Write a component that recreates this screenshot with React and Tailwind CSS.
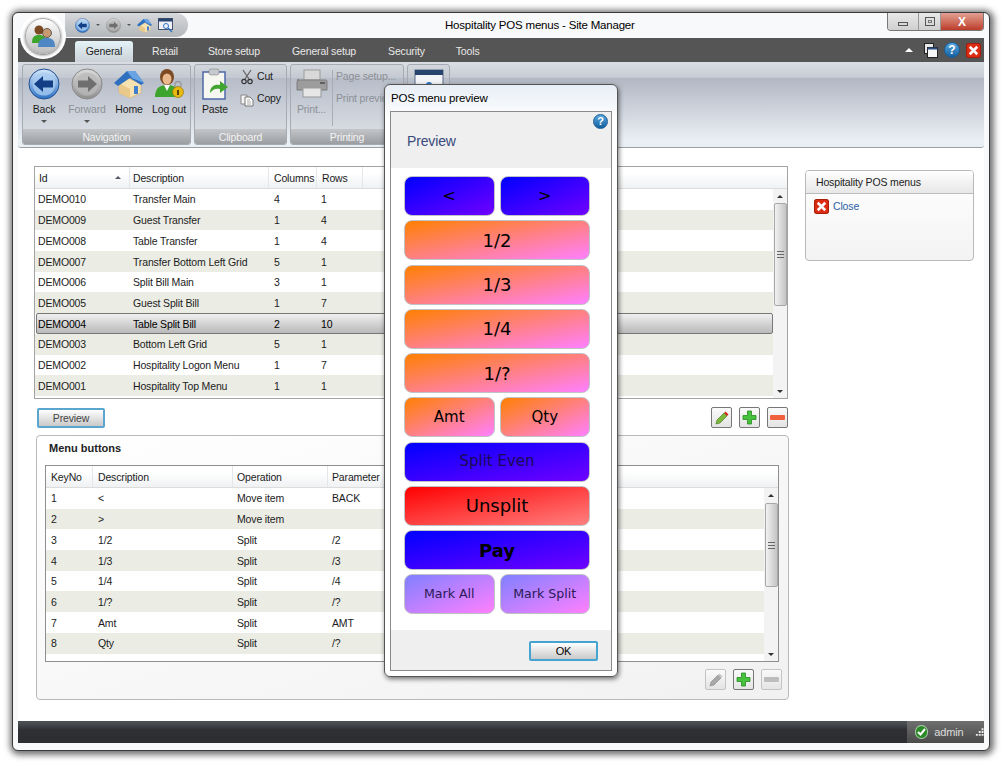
import React from "react";

const topRows = [
  ["DEMO010", "Transfer Main", "4", "1"],
  ["DEMO009", "Guest Transfer", "1", "4"],
  ["DEMO008", "Table Transfer", "1", "4"],
  ["DEMO007", "Transfer Bottom Left Grid", "5", "1"],
  ["DEMO006", "Split Bill Main", "3", "1"],
  ["DEMO005", "Guest Split Bill", "1", "7"],
  ["DEMO004", "Table Split Bill", "2", "10"],
  ["DEMO003", "Bottom Left Grid", "5", "1"],
  ["DEMO002", "Hospitality Logon Menu", "1", "7"],
  ["DEMO001", "Hospitality Top Menu", "1", "1"],
];

const menuRows = [
  ["1", "<", "Move item", "BACK"],
  ["2", ">", "Move item", ""],
  ["3", "1/2", "Split", "/2"],
  ["4", "1/3", "Split", "/3"],
  ["5", "1/4", "Split", "/4"],
  ["6", "1/?", "Split", "/?"],
  ["7", "Amt", "Split", "AMT"],
  ["8", "Qty", "Split", "/?"],
];

function BackIcon({ size = 32, grey = false, flip = false }) {
  const a = grey ? "#dcdcdc" : "#d6e8fb";
  const b = grey ? "#8f8f8f" : "#2f72c4";
  const arrow = grey ? "#6f6f6f" : "#123f86";
  return (
    <svg width={size} height={size} viewBox="0 0 32 32">
      <defs>
        <linearGradient id={grey ? "bg-g" : "bg-b"} x1="0" y1="0" x2="0" y2="1">
          <stop offset="0" stopColor={a} />
          <stop offset="1" stopColor={b} />
        </linearGradient>
      </defs>
      <circle cx="16" cy="16" r="15" fill={`url(#${grey ? "bg-g" : "bg-b"})`} stroke={grey ? "#888" : "#1e4f94"} />
      <circle cx="16" cy="16" r="11.5" fill={grey ? "#b9b9b9" : "#a9cdf2"} opacity="0.75" />
      <path
        d={flip ? "M26 16 L17 8 V12.5 H7 V19.5 H17 V24 Z" : "M6 16 L15 8 V12.5 H25 V19.5 H15 V24 Z"}
        fill={arrow}
      />
    </svg>
  );
}

function HomeIcon({ size = 30 }) {
  return (
    <svg width={size} height={size} viewBox="0 0 30 30">
      <path d="M5 14 L14 9 L27 15 V24 L16 29 L5 24 Z" fill="#f6e2b0" stroke="#c9a25c" strokeWidth="0.5" />
      <path d="M5 14 L16 20 V29 L5 24 Z" fill="#e8c98a" />
      <path d="M0 14 L13 2 L21 2 L30 14 L27 16 L16 9 L4 17 Z" fill="#2f6fc0" />
      <path d="M13 2 L21 2 L30 14 L18 9 Z" fill="#6aa4e3" />
      <rect x="20" y="17" width="4" height="8" fill="#3f7fcf" />
    </svg>
  );
}

function PersonIcon({ size = 30 }) {
  return (
    <svg width={size} height={size} viewBox="0 0 30 30">
      <ellipse cx="13" cy="8" rx="7" ry="8" fill="#7c4a22" />
      <ellipse cx="13" cy="10" rx="4.5" ry="5.5" fill="#e9b98d" />
      <path d="M1 28 C1 18 7 16 13 16 C19 16 25 18 25 28 Z" fill="#3da52e" />
      <path d="M10 16 L13 22 L16 16 Z" fill="#fff" />
      <path d="M21 18 V15.5 A3 3 0 0 1 27 15.5 V18" fill="none" stroke="#999" strokeWidth="1.3" />
      <circle cx="24" cy="23" r="5.5" fill="#e8b90f" stroke="#8a6a00" strokeWidth="0.6" />
      <rect x="23" y="21" width="2" height="5" fill="#5a4300" />
    </svg>
  );
}

function PasteIcon() {
  return (
    <svg width="28" height="32" viewBox="0 0 28 32">
      <rect x="2" y="4" width="22" height="27" fill="#f7f7f2" stroke="#4d68a8" strokeWidth="1.5" />
      <rect x="8" y="1" width="10" height="6" rx="2" fill="#c6c9ce" stroke="#777" strokeWidth="0.5" />
      <path d="M9 25 C9 18 14 16 19 17 V13 L27 19 L19 25 V21 C15 20 12 21 9 25 Z" fill="#42a52f" />
    </svg>
  );
}

function PrinterIcon() {
  return (
    <svg width="32" height="30" viewBox="0 0 32 30">
      <rect x="8" y="1" width="16" height="10" fill="#d8d8d8" stroke="#9b9b9b" />
      <path d="M1 11 H30 Q31 11 31 13 V21 H1 V13 Q1 11 3 11 Z" fill="#9c9c9c" stroke="#7c7c7c" />
      <rect x="7" y="19" width="18" height="9" fill="#e6e6e6" stroke="#999" />
      <rect x="24" y="13" width="5" height="2" fill="#5f5f5f" />
    </svg>
  );
}

function CutIcon() {
  return (
    <svg width="14" height="16" viewBox="0 0 14 16">
      <path d="M3 1 L9 10 M11 1 L5 10" stroke="#666" strokeWidth="1.3" fill="none" />
      <circle cx="4" cy="12.5" r="2.2" fill="none" stroke="#333" strokeWidth="1.2" />
      <circle cx="10" cy="12.5" r="2.2" fill="none" stroke="#333" strokeWidth="1.2" />
    </svg>
  );
}

function CopyIcon() {
  return (
    <svg width="14" height="15" viewBox="0 0 14 15">
      <path d="M1 3 H7 V12 H1 Z" fill="#f4f4f4" stroke="#888" />
      <path d="M5 5 H10 L13 8 V14 H5 Z" fill="#fff" stroke="#777" />
      <path d="M7 8 H10 M7 10 H11 M7 12 H11" stroke="#aaa" />
    </svg>
  );
}

function StackIcon() {
  return (
    <svg width="14" height="15" viewBox="0 0 14 15">
      <rect x="0.5" y="0.5" width="9" height="10" fill="#e8e8e8" stroke="#222" />
      <rect x="3.5" y="4.5" width="10" height="10" fill="#f6f6f6" stroke="#222" />
      <rect x="3.5" y="4.5" width="10" height="2" fill="#2a4e82" />
    </svg>
  );
}

function PreviewWindowIcon() {
  return (
    <svg width="30" height="34" viewBox="0 0 30 34">
      <rect x="1" y="1" width="28" height="30" fill="#f2f4f8" stroke="#5b6b86" />
      <rect x="1" y="1" width="28" height="5" fill="#26446e" />
      <circle cx="15" cy="16" r="3" fill="#2f72c4" />
    </svg>
  );
}

function SearchWindowIcon() {
  return (
    <svg width="16" height="15" viewBox="0 0 16 15">
      <rect x="0.5" y="0.5" width="14" height="11" fill="#eef2f8" stroke="#46536d" />
      <rect x="0.5" y="0.5" width="14" height="3" fill="#26446e" />
      <circle cx="8" cy="8" r="2.5" fill="none" stroke="#2f72c4" />
      <path d="M10 10 L14 14" stroke="#2f72c4" strokeWidth="1.5" />
    </svg>
  );
}

function HelpIcon({ size = 15 }) {
  return (
    <span
      className="flex shrink-0 items-center justify-center rounded-full border border-[#1b5c96] bg-linear-to-b from-[#5aa9e0] to-[#0f5f9f] font-bold tracking-normal text-white [font-family:'Liberation_Sans',sans-serif]"
      style={{ width: size, height: size, fontSize: size - 4 }}
    >
      ?
    </span>
  );
}

function CloseBox({ size = 14 }) {
  return (
    <svg width={size} height={size} viewBox="0 0 14 14" className="shrink-0">
      <rect x="0.5" y="0.5" width="13" height="13" rx="2" fill="#dc2d14" stroke="#a81c08" />
      <path d="M3.5 3.5 L10.5 10.5 M10.5 3.5 L3.5 10.5" stroke="#fff" strokeWidth="2.4" />
    </svg>
  );
}

function Big({ label, width, disabled, arrow, children }) {
  return (
    <div className="flex flex-col items-center" style={{ width }}>
      <div className="flex h-[33px] items-center justify-center">{children}</div>
      <span className={`mt-[3px] whitespace-nowrap leading-[13px] ${disabled ? "text-[#8d9097]" : "text-[#1c1c1c]"}`}>
        {label}
      </span>
      {arrow && <span className="mt-[4px] h-0 w-0 border-x-[3px] border-t-[3px] border-x-transparent border-t-[#555]" />}
    </div>
  );
}

function RibbonGroup({ title, width, children }) {
  return (
    <div
      className="flex h-[81px] shrink-0 flex-col overflow-hidden rounded-[3px] border border-[#a6abb3] bg-[linear-gradient(#d3d7dd_0%,#c4c9d1_16%,#b7bdc8_17%,#dfe4ea_100%)]"
      style={{ width }}
    >
      <div className="flex min-h-0 flex-1 pt-[2px]">{children}</div>
      <div className="flex h-[15px] shrink-0 items-center justify-center bg-linear-to-b from-[#c4c6c9] to-[#9a9da1] pt-px leading-none text-[#f3f3f3]">
        {title}
      </div>
    </div>
  );
}

function Scrollbar({ thumbTop, thumbHeight }) {
  return (
    <div className="flex w-[14px] shrink-0 flex-col items-center bg-[#f3f3f3]">
      <span className="mt-[6px] h-0 w-0 shrink-0 border-x-[3px] border-b-[3px] border-x-transparent border-b-[#333]" />
      <div
        className="flex w-[13px] shrink-0 items-center justify-center rounded-[2px] border border-[#a8a8a8] bg-linear-to-r from-[#f2f2f2] to-[#c4c4c4]"
        style={{ marginTop: thumbTop, height: thumbHeight }}
      >
        <span className="h-[7px] w-[7px] border-y border-[#666] bg-[linear-gradient(transparent_40%,#666_40%,#666_60%,transparent_60%)]" />
      </div>
      <span className="mb-[5px] mt-auto h-0 w-0 shrink-0 border-x-[3px] border-t-[3px] border-x-transparent border-t-[#333]" />
    </div>
  );
}

function HeaderCell({ width, className = "", children }) {
  return (
    <div
      className={`flex h-full shrink-0 items-center border-r border-[#e4e6e9] ${className}`}
      style={{ width }}
    >
      {children}
    </div>
  );
}

function ToolButton({ disabled, children }) {
  return (
    <div
      className={`flex h-[21px] w-[21px] items-center justify-center rounded-[2px] border bg-linear-to-b from-[#fafafa] to-[#e4e4e4] ${
        disabled ? "border-[#c4c4c4]" : "border-[#777]"
      }`}
    >
      {children}
    </div>
  );
}

function Pencil({ grey }) {
  return (
    <svg width="14" height="14" viewBox="0 0 14 14">
      <path d="M1 13 L2 9 L9 2 L12 5 L5 12 Z" fill={grey ? "#a8a8a8" : "#7cb93a"} stroke={grey ? "#888" : "#3f6f1a"} strokeWidth="0.6" />
      <path d="M9 2 L10.5 0.5 L13.5 3.5 L12 5 Z" fill={grey ? "#c4c4c4" : "#d9281a"} />
    </svg>
  );
}

function Plus() {
  return (
    <svg width="15" height="15" viewBox="0 0 15 15">
      <path d="M5.5 1 H9.5 V5.5 H14 V9.5 H9.5 V14 H5.5 V9.5 H1 V5.5 H5.5 Z" fill="#46c23c" stroke="#278a20" strokeWidth="0.8" />
    </svg>
  );
}

function Minus({ grey }) {
  return <span className={`block h-[5px] w-[15px] rounded-[1px] ${grey ? "bg-[#bdbdbd]" : "bg-[#f0603c]"}`} />;
}

function PosButton({ gradient, className = "", children }) {
  return (
    <div
      className={`flex h-[40px] items-center justify-center rounded-[8px] border border-[#bfc2c6] tracking-normal text-black [font-family:'DejaVu_Sans',sans-serif] ${gradient} ${className}`}
    >
      {children}
    </div>
  );
}

const blue = "bg-linear-to-br/srgb from-[#0000ff] to-[#7000ff]";
const orange = "bg-linear-to-br/srgb from-[#ff8000] to-[#ff80ff]";
const red = "bg-linear-to-br/srgb from-[#ff0000] to-[#ff8080]";
const mauve = "bg-linear-to-br/srgb from-[#8080ff] to-[#ff80ff]";

function PreviewDialog() {
  return (
    <div className="absolute left-[384px] top-[84px] z-20 flex h-[593px] w-[234px] flex-col rounded-[6px] border border-[#555] bg-linear-to-b from-[#e8eef5] to-white to-[6%] px-[5px] pb-[5px] shadow-[1px_2px_5px_rgba(0,0,0,0.55)]">
      <div className="flex h-[26px] shrink-0 items-center pl-px pt-[2px] text-[11.5px] text-black">POS menu preview</div>
      <div className="flex min-h-0 flex-1 flex-col border border-[#8a8a8a]">
        <div className="relative flex h-[56px] shrink-0 items-center bg-[#efefef] pl-[16px] pt-[2px] text-[14px] text-[#39497c]">
          Preview
          <span className="absolute right-[3px] top-[2px]">
            <HelpIcon size={15} />
          </span>
        </div>
        <div className="flex flex-1 flex-col gap-[4.25px] bg-white pl-[13px] pr-[21px] pt-[8px]">
          <div className="grid grid-cols-2 gap-x-[5px]">
            <PosButton gradient={blue} className="text-[16px]">&lt;</PosButton>
            <PosButton gradient={blue} className="text-[16px]">&gt;</PosButton>
          </div>
          <PosButton gradient={orange} className="text-[18px]">1/2</PosButton>
          <PosButton gradient={orange} className="text-[18px]">1/3</PosButton>
          <PosButton gradient={orange} className="text-[18px]">1/4</PosButton>
          <PosButton gradient={orange} className="text-[18px]">1/?</PosButton>
          <div className="grid grid-cols-2 gap-x-[5px]">
            <PosButton gradient={orange} className="text-[15px]">Amt</PosButton>
            <PosButton gradient={orange} className="text-[15px]">Qty</PosButton>
          </div>
          <PosButton gradient={blue} className="text-[15px]"><span className="text-[#1a0a55]">Split Even</span></PosButton>
          <PosButton gradient={red} className="text-[18px]">Unsplit</PosButton>
          <PosButton gradient={blue} className="text-[18px] font-bold">Pay</PosButton>
          <div className="grid grid-cols-2 gap-x-[5px]">
            <PosButton gradient={mauve} className="text-[12.6px]"><span className="text-[#2a1a55]">Mark All</span></PosButton>
            <PosButton gradient={mauve} className="text-[12.6px]"><span className="text-[#2a1a55]">Mark Split</span></PosButton>
          </div>
        </div>
        <div className="flex h-[40px] shrink-0 items-start justify-end bg-[#efefef] pr-[13px] pt-[11px]">
          <div className="flex h-[20px] w-[69px] items-center justify-center rounded-[2px] border-2 border-[#45a4d0] bg-linear-to-b from-white to-[#c9c9c9] text-[11px] text-black">
            OK
          </div>
        </div>
      </div>
    </div>
  );
}

export default function App() {
  return (
    <div className="relative h-[762px] w-[1002px] overflow-hidden bg-white pl-[12px] pt-[12px] text-[10.5px] tracking-[-0.15px] text-[#1c1c1c] [font-family:'Liberation_Sans',sans-serif]">
      <div className="flex h-[739px] w-[978px] flex-col rounded-[6px] border border-[#3a3a3a] bg-[#f8f9fa] px-[5px] pb-[7px] shadow-[1px_1px_6px_3px_rgba(0,0,0,0.55)]">
        {/* title bar */}
        <div className="flex h-[25px] shrink-0">
          <div className="ml-[47px] flex h-[24px] w-[123px] items-center gap-[6px] rounded-r-[12px] bg-linear-to-b from-[#d6d8db] to-[#b4b7bb] pl-[10px]">
            <BackIcon size={15} />
            <span className="h-0 w-0 border-x-[2px] border-t-[2px] border-x-transparent border-t-[#555]" />
            <BackIcon size={15} grey flip />
            <span className="h-0 w-0 border-x-[2px] border-t-[2px] border-x-transparent border-t-[#555]" />
            <HomeIcon size={15} />
            <SearchWindowIcon />
          </div>
          <div className="ml-[257px] pt-[5px] text-[11.5px] leading-[14px] tracking-[-0.2px] text-black">Hospitality POS menus - Site Manager</div>
          <div className="ml-auto flex h-[18px] w-[97px] overflow-hidden rounded-b-[4px] border border-t-0 border-[#777]">
            <div className="flex w-[30px] items-end justify-center bg-linear-to-b from-[#e9e9e9] to-[#cfcfcf] pb-[4px]">
              <span className="h-[4px] w-[10px] border border-[#555]" />
            </div>
            <div className="flex w-[23px] items-center justify-center border-x border-[#999] bg-linear-to-b from-[#e9e9e9] to-[#cfcfcf]">
              <span className="flex h-[9px] w-[10px] items-center justify-center border border-[#555]">
                <span className="h-[3px] w-[4px] border border-[#777]" />
              </span>
            </div>
            <div className="flex flex-1 items-center justify-center bg-linear-to-b from-[#e2a093] to-[#bb3a28] text-[12px] font-bold leading-none text-white">
              X
            </div>
          </div>
        </div>

        {/* ribbon tabs */}
        <div className="flex h-[24px] shrink-0 items-end bg-[#555] text-[#e8e8e8]">
          <div className="ml-[57px] flex h-[21px] w-[58px] items-center justify-center rounded-t-[3px] bg-linear-to-b from-[#e3f3f7] to-[#ccd1d8] text-[#222]">
            General
          </div>
          <div className="ml-[19px] h-[21px] leading-[21px]">Retail</div>
          <div className="ml-[30px] h-[21px] leading-[21px]">Store setup</div>
          <div className="ml-[32px] h-[21px] leading-[21px]">General setup</div>
          <div className="ml-[32px] h-[21px] leading-[21px]">Security</div>
          <div className="ml-[31px] h-[21px] leading-[21px]">Tools</div>
          <div className="ml-auto flex h-full items-center gap-[6px] pr-[3px]">
            <span className="mr-[5px] h-0 w-0 border-x-[4px] border-b-[4px] border-x-transparent border-b-white" />
            <StackIcon />
            <HelpIcon size={16} />
            <CloseBox size={15} />
          </div>
        </div>

        {/* ribbon */}
        <div className="flex h-[86px] shrink-0 gap-[3px] rounded-b-[3px] border-b border-[#9a9fa6] bg-[linear-gradient(#dadee4_0%,#c7ccd4_18%,#b1b7c3_19%,#eaeff4_92%)] pl-[4px] pt-[2px]">
          <RibbonGroup title="Navigation" width={169}>
            <Big label="Back" width={42} arrow><BackIcon /></Big>
            <Big label="Forward" width={44} disabled arrow><BackIcon grey flip /></Big>
            <Big label="Home" width={40}><HomeIcon /></Big>
            <Big label="Log out" width={40}><PersonIcon /></Big>
          </RibbonGroup>
          <RibbonGroup title="Clipboard" width={93}>
            <Big label="Paste" width={40}><PasteIcon /></Big>
            <div className="ml-[5px] flex flex-col gap-[6px] pt-[2px]">
              <div className="flex h-[16px] items-center gap-[3px]"><CutIcon /><span>Cut</span></div>
              <div className="flex h-[16px] items-center gap-[3px]"><CopyIcon /><span>Copy</span></div>
            </div>
          </RibbonGroup>
          <RibbonGroup title="Printing" width={114}>
            <Big label="Print..." width={41} disabled><PrinterIcon /></Big>
            <div className="my-[3px] h-[56px] w-px bg-[#a8adb5]" />
            <div className="ml-[3px] flex flex-col gap-[6px] whitespace-nowrap pt-[2px] text-[#8d9097]">
              <div className="flex h-[16px] items-center">Page setup...</div>
              <div className="flex h-[16px] w-[48px] items-center overflow-hidden">Print preview</div>
            </div>
          </RibbonGroup>
          <RibbonGroup title="" width={43}>
            <div className="flex w-full justify-center pt-[2px]"><PreviewWindowIcon /></div>
          </RibbonGroup>
        </div>

        {/* page */}
        <div className="flex min-h-0 flex-1 bg-white pl-[16px]">
          <div className="w-[756px] shrink-0 pt-[18px]">
            <div className="flex h-[233px] w-[754px] flex-col border border-[#a3a3a3]">
              <div className="flex h-[22px] shrink-0 items-center border-b border-[#dcdcdc] bg-linear-to-b from-white from-30% to-[#eff1f3]">
                <HeaderCell width={95} className="relative pl-[4px] pt-[2px]">
                  Id
                  <span className="absolute right-[8px] top-[9px] h-0 w-0 border-x-[3px] border-b-[3px] border-x-transparent border-b-[#556]" />
                </HeaderCell>
                <HeaderCell width={139} className="pl-[3px] pt-[2px]">Description</HeaderCell>
                <HeaderCell width={48} className="pl-[5px] pt-[2px]">Columns</HeaderCell>
                <HeaderCell width={46} className="pl-[5px] pt-[2px]">Rows</HeaderCell>
              </div>
              <div className="flex min-h-0 flex-1">
                <div className="min-w-0 flex-1">
                  {topRows.map((r, i) => {
                    const selected = r[0] === "DEMO004";
                    return (
                      <div
                        key={r[0]}
                        className={`flex h-[20.7px] items-center pt-[2px] ${
                          selected
                            ? "ml-px rounded-[2px] border border-[#777] bg-linear-to-b from-[#f0f0f0] to-[#b9b9b9] text-black"
                            : i % 2
                              ? "bg-[#ebece4]"
                              : "bg-white"
                        }`}
                      >
                        <div className={selected ? "w-[92px] pl-px" : "w-[94px] pl-[3px]"}>{r[0]}</div>
                        <div className="w-[143px] pl-[4px]">{r[1]}</div>
                        <div className="w-[46px] pl-[2px]">{r[2]}</div>
                        <div className="pl-[3px]">{r[3]}</div>
                      </div>
                    );
                  })}
                </div>
                <Scrollbar thumbTop={5} thumbHeight={103} />
              </div>
            </div>

            <div className="mt-[8px] flex h-[21px] pl-[3px]">
              <div className="mt-px flex h-[20px] w-[68px] items-center justify-center rounded-[2px] border-2 border-[#5aa6cf] bg-linear-to-b from-white to-[#c9c9c9] pt-[2px] text-[#444]">
                Preview
              </div>
              <div className="ml-auto flex gap-[7px] pr-[2px]">
                <ToolButton><Pencil /></ToolButton>
                <ToolButton><Plus /></ToolButton>
                <ToolButton><Minus /></ToolButton>
              </div>
            </div>

            <div className="ml-[2px] mt-[7px] h-[265px] w-[753px] rounded-[4px] border border-[#b9b9b9] bg-linear-to-br from-white to-[#f1f1f1] pl-[8px] pt-[5px]">
              <div className="h-[24px] pl-[4px] text-[11px] font-bold leading-[14px] tracking-normal text-[#222]">Menu buttons</div>
              <div className="flex h-[197px] w-[734px] flex-col border border-[#8f8f8f] bg-white">
                <div className="flex h-[22px] shrink-0 items-center border-b border-[#dcdcdc] bg-linear-to-b from-white from-30% to-[#eff1f3]">
                  <HeaderCell width={47} className="pl-[5px] pt-[3px]">KeyNo</HeaderCell>
                  <HeaderCell width={140} className="pl-[5px] pt-[3px]">Description</HeaderCell>
                  <HeaderCell width={95} className="pl-[4px] pt-[3px]">Operation</HeaderCell>
                  <HeaderCell width={64} className="pl-[4px] pt-[3px]">Parameter</HeaderCell>
                </div>
                <div className="flex min-h-0 flex-1">
                  <div className="min-w-0 flex-1">
                    {menuRows.map((r, i) => (
                      <div key={r[0]} className={`flex h-[20.7px] items-center pt-[2px] ${i % 2 ? "bg-[#ebece4]" : "bg-white"}`}>
                        <div className="w-[47px] pl-[5px]">{r[0]}</div>
                        <div className="w-[140px] pl-[5px]">{r[1]}</div>
                        <div className="w-[95px] pl-[4px]">{r[2]}</div>
                        <div className="pl-[4px]">{r[3]}</div>
                      </div>
                    ))}
                  </div>
                  <Scrollbar thumbTop={6} thumbHeight={84} />
                </div>
              </div>
              <div className="mt-[7px] flex justify-end gap-[7px] pr-[6px]">
                <ToolButton disabled><Pencil grey /></ToolButton>
                <ToolButton><Plus /></ToolButton>
                <ToolButton disabled><Minus grey /></ToolButton>
              </div>
            </div>
          </div>

          <div className="ml-[15px] mt-[22px] h-[91px] w-[169px] overflow-hidden rounded-[4px] border border-[#b9b9b9] bg-linear-to-b from-white to-[#f3f3f3]">
            <div className="flex h-[23px] items-center border-b border-[#bcbcbc] bg-linear-to-b from-white to-[#e7e7e7] pl-[10px] pt-[2px] text-[#222]">
              Hospitality POS menus
            </div>
            <div className="flex items-center gap-[4px] pl-[8px] pt-[5px]">
              <CloseBox size={15} />
              <span className="text-[#2a5fa8]">Close</span>
            </div>
          </div>
        </div>

        {/* status bar */}
        <div className="flex h-[22px] shrink-0 bg-linear-to-b from-[#4a4d52] from-10% via-[#2e3034] via-40% to-[#2c2d30]">
          <div className="ml-auto flex w-[77px] items-center gap-[6px] bg-linear-to-b from-[#6f6f6f] to-[#4a4a4a] pl-[8px] text-[#dcdcdc]">
            <span className="flex h-[14px] w-[14px] items-center justify-center rounded-full border border-white/60 bg-[#2d8a2a]">
              <svg width="9" height="8" viewBox="0 0 9 8">
                <path d="M1 4 L3.5 6.5 L8 1" stroke="#fff" strokeWidth="2" fill="none" />
              </svg>
            </span>
            <span className="text-[11px]">admin</span>
            <svg width="11" height="11" viewBox="0 0 11 11" className="ml-[4px]">
              <path d="M8 1 h2 v2 h-2 z M5 4 h2 v2 h-2 z M8 4 h2 v2 h-2 z M2 7 h2 v2 h-2 z M5 7 h2 v2 h-2 z M8 7 h2 v2 h-2 z" fill="#eee" />
            </svg>
          </div>
        </div>
      </div>

      {/* application orb */}
      <div className="absolute left-[20px] top-[13px] z-10 flex h-[46px] w-[46px] items-center justify-center rounded-full bg-white">
        <div className="flex h-[36px] w-[36px] items-center justify-center rounded-full border border-[#aaa] bg-linear-to-b from-white to-[#bdbdbd] shadow-[0_1px_3px_rgba(0,0,0,0.6)]">
          <svg width="26" height="24" viewBox="0 0 26 24">
            <circle cx="9" cy="6" r="4.5" fill="#7c4a22" />
            <path d="M2 19 C2 12 5 11 9 11 C13 11 16 12 16 19 Z" fill="#3da52e" />
            <circle cx="17" cy="9" r="4.5" fill="#c79a72" stroke="#333" strokeWidth="0.7" />
            <path d="M8 23 C8 16 12 14 17 14 C22 14 25 16 25 23 Z" fill="#4f87c5" />
          </svg>
        </div>
      </div>

      <PreviewDialog />
    </div>
  );
}
